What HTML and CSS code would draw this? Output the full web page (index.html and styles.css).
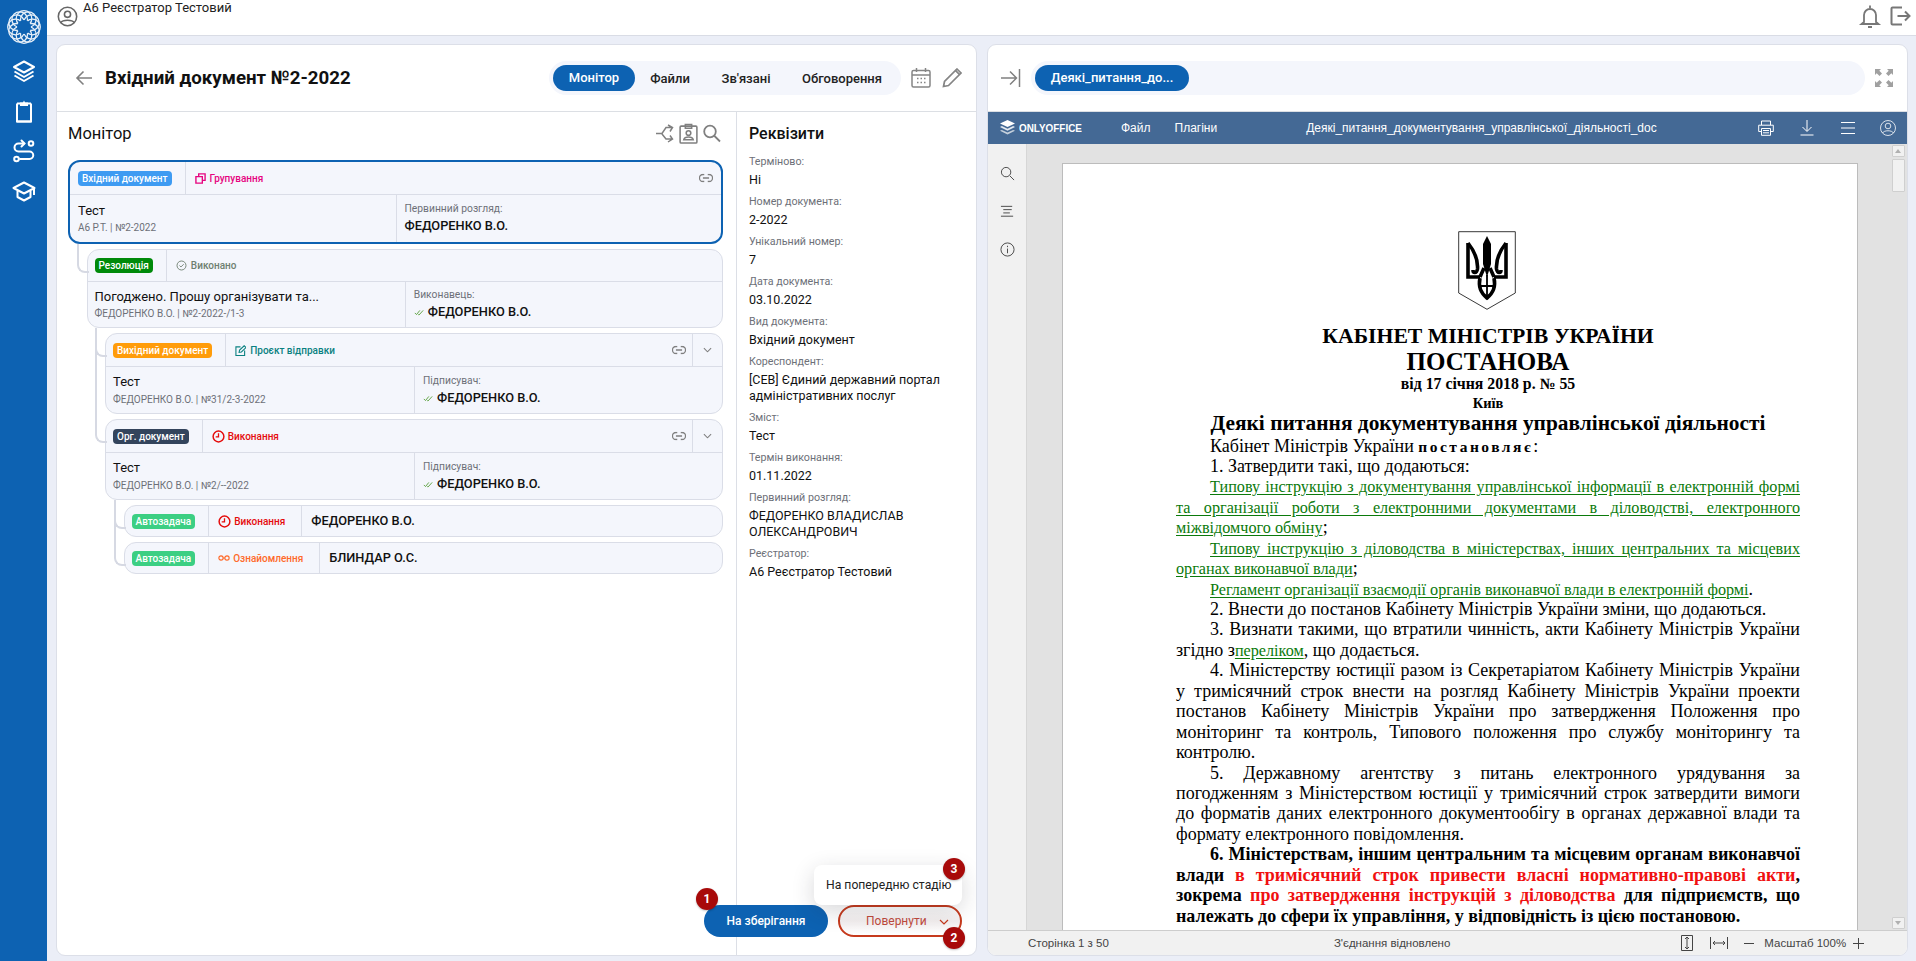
FILE: index.html
```html
<!DOCTYPE html>
<html lang="uk">
<head>
<meta charset="utf-8">
<title>Вхідний документ №2-2022</title>
<link rel="stylesheet" href="styles.css">
</head>
<body>
<svg class="defs" aria-hidden="true">
  <symbol id="i-link" viewBox="0 0 16 10"><path d="M6 1H4.5a4 4 0 0 0 0 8H6M10 1h1.500a4 4 0 0 1 0 8H10M4.500 5h7" fill="none" stroke="currentColor" stroke-width="1.500"/></symbol>
  <symbol id="i-chev" viewBox="0 0 10 6"><path d="M1 1l4 4 4-4" fill="none" stroke="currentColor" stroke-width="1.200"/></symbol>
  <symbol id="i-check" viewBox="0 0 12 8"><path d="M1 4.500l2 2 4-5M5 6.500l1 .5 5-5.500" fill="none" stroke="#5aa03c" stroke-width="1.100"/></symbol>
  <symbol id="i-clock" viewBox="0 0 14 14"><circle cx="7" cy="7" r="5.800" fill="none" stroke="currentColor" stroke-width="1.600"/><path d="M7 3.500V7.500H4" fill="none" stroke="currentColor" stroke-width="1.400"/></symbol>
</svg>
<aside class="rail">
  <svg class="rail-logo" viewBox="0 0 34 34"><g fill="none" stroke="#e6eff8" stroke-width="1.300"><circle cx="17" cy="8.500" r="7.800"/><circle cx="21.300" cy="9.600" r="7.800"/><circle cx="24.400" cy="12.700" r="7.800"/><circle cx="25.500" cy="17" r="7.800"/><circle cx="24.400" cy="21.300" r="7.800"/><circle cx="21.300" cy="24.400" r="7.800"/><circle cx="17" cy="25.500" r="7.800"/><circle cx="12.700" cy="24.400" r="7.800"/><circle cx="9.600" cy="21.300" r="7.800"/><circle cx="8.500" cy="17" r="7.800"/><circle cx="9.600" cy="12.700" r="7.800"/><circle cx="12.700" cy="9.600" r="7.800"/></g><circle cx="17" cy="17" r="7" fill="#0d62b2"/></svg>
  <svg class="rail-ic" viewBox="0 0 24 24"><g fill="none" stroke="#fff" stroke-width="2" stroke-linejoin="round"><path d="M12 2.500L22 8l-10 5.500L2 8z"/><path d="M2.500 12.500L12 18l9.500-5.500"/><path d="M2.500 16.500L12 22l9.500-5.500"/></g></svg>
  <svg class="rail-ic" viewBox="0 0 24 24"><path d="M5 4.500v18h14v-18" fill="#0d62b2" stroke="#fff" stroke-width="2"/><path d="M5 4.500h14M5 22.500h14" stroke="#fff" stroke-width="2"/><path d="M8 3.500h3l1-2 1 2h3V7H8z" fill="#fff"/></svg>
  <svg class="rail-ic" viewBox="0 0 24 24"><g fill="none" stroke="#fff" stroke-width="2" stroke-linecap="round"><circle cx="19" cy="4.500" r="2.300"/><circle cx="4.500" cy="20" r="2.300"/><path d="M12 4.500H6.500a4 4 0 0 0 0 8h11a3.700 3.700 0 0 1 0 7.500H8"/><path d="M9.500 1.500l3 3-3 3"/></g></svg>
  <svg class="rail-ic" viewBox="0 0 24 24"><g fill="none" stroke="#fff" stroke-width="2" stroke-linejoin="round"><path d="M12 3.500L1.500 9 12 14.500 22.500 9z"/><path d="M5.500 12v6l6.500 3.500 6.500-3.500v-6"/><path d="M22 9v7"/></g></svg>
</aside>
<div class="main">
  <header class="topbar">
    <svg class="top-avatar" viewBox="0 0 24 24"><g fill="none" stroke="#666" stroke-width="1.800"><circle cx="12" cy="12" r="10.500"/><circle cx="12" cy="9.500" r="3.500"/><path d="M4.500 19c2-3.500 13-3.500 15 0"/></g></svg>
    <div class="top-name">А6 Реєстратор Тестовий</div>
    <div class="top-right">
      <svg class="top-ic" viewBox="0 0 24 24"><path d="M12 1.500v2.500M6 18V11a6 6 0 0 1 12 0v7l2.500 2h-17zM10 23h4" fill="none" stroke="#777" stroke-width="1.800"/></svg>
      <svg class="top-ic" viewBox="0 0 24 24"><path d="M14 3.500H4.500a1 1 0 0 0-1 1v15a1 1 0 0 0 1 1H14M9.500 12H21.500M17 7.500l4.500 4.500-4.500 4.500" fill="none" stroke="#777" stroke-width="2"/></svg>
    </div>
  </header>
  <div class="content">
    <section class="card left">
      <div class="card-head">
        <svg class="back" viewBox="0 0 18 16"><path d="M17 8H2M8.500 1.500L2 8l6.500 6.500" fill="none" stroke="#808080" stroke-width="1.600"/></svg>
        <h1>Вхідний документ №2-2022</h1>
        <nav class="tabs">
          <span class="tab active">Монітор</span>
          <span class="tab t2">Файли</span>
          <span class="tab t3">Зв'язані</span>
          <span class="tab t4">Обговорення</span>
        </nav>
        <svg class="head-ic cal" viewBox="0 0 20 20"><g fill="none" stroke="#858585" stroke-width="1.500"><rect x="1" y="2.500" width="18" height="16.500" rx="1.500"/><path d="M1 7h18M5.500 0v4M14.500 0v4"/><path d="M6 10.500h1.500M9.500 10.500H11M13 10.500h1.500M6 14.500h1.500M9.500 14.500H11M13 14.500h1.500"/></g></svg>
        <svg class="head-ic pen" viewBox="0 0 20 20"><path d="M1.500 18.500l1-5L13.500 2.500l4 4-11 11z M15 1l4 4-1.500 1.500-4-4z" fill="none" stroke="#858585" stroke-width="1.700"/></svg>
      </div>
      <div class="left-body">
        <div class="monitor">
          <div class="mon-head">
            <h2>Монітор</h2>
            <div class="mon-tools">
              <svg class="tool t-a" viewBox="0 0 18 18"><path d="M0 9h6l4-6h6M12 .500L16.500 3 14 7M6 9.500l4 5h6M12 17.500l4.500-3L14 11" fill="none" stroke="#808080" stroke-width="1.500"/></svg>
              <svg class="tool t-b" viewBox="0 0 18 20"><g fill="none" stroke="#808080" stroke-width="1.500"><rect x="1" y="3" width="16" height="16" rx="1"/><path d="M6 5V1.500h6V5z"/><circle cx="9" cy="9.500" r="2.200"/><path d="M4.500 16c1-3.500 8-3.500 9 0z"/></g></svg>
              <svg class="tool t-c" viewBox="0 0 18 18"><g fill="none" stroke="#808080" stroke-width="1.800"><circle cx="7" cy="7" r="5.800"/><path d="M11 11l6 6"/></g></svg>
            </div>
          </div>
          <article class="node selected">
            <div class="n-top h-lg">
              <div class="cell"><span class="tag c-blue">Вхідний документ</span></div>
              <div class="cell st c-pink"><svg class="st-ic" viewBox="0 0 12 12"><path d="M4 4V1h7v7H8M1 4h7v7H1z" fill="none" stroke="currentColor" stroke-width="1.500"/></svg>Групування</div>
              <div class="tail"><svg class="link" viewBox="0 0 16 10"><use href="#i-link"/></svg></div>
            </div>
            <div class="n-body b-lg">
              <div class="col"><div class="ttl">Тест</div><div class="sub">А6 Р.Т. | №2-2022</div></div>
              <div class="col"><div class="lbl">Первинний розгляд:</div><div class="who">ФЕДОРЕНКО В.О.</div></div>
            </div>
          </article>
          <div class="branch only">
            <article class="node">
              <div class="n-top">
                <div class="cell"><span class="tag c-green">Резолюція</span></div>
                <div class="cell st c-gray"><svg class="st-ic" viewBox="0 0 12 12"><circle cx="6" cy="6" r="4.900" fill="none" stroke="currentColor"/><path d="M3.800 6l1.600 1.600 3-3" fill="none" stroke="currentColor"/></svg>Виконано</div>
              </div>
              <div class="n-body b-sm">
                <div class="col"><div class="ttl">Погоджено. Прошу організувати та...</div><div class="sub">ФЕДОРЕНКО В.О. | №2-2022-/1-3</div></div>
                <div class="col"><div class="lbl">Виконавець:</div><div class="who"><svg class="chk" viewBox="0 0 12 8"><use href="#i-check"/></svg>ФЕДОРЕНКО В.О.</div></div>
              </div>
            </article>
            <div class="branch">
              <article class="node">
                <div class="n-top h-md">
                  <div class="cell"><span class="tag c-orange">Вихідний документ</span></div>
                  <div class="cell st c-teal"><svg class="st-ic" viewBox="0 0 12 12"><path d="M6 2H1v9.500h9.500V6M4.500 8l.5-2.500L10 .8l2 2-5 4.800z" fill="none" stroke="currentColor" stroke-width="1.200"/></svg>Проєкт відправки</div>
                  <div class="tail"><svg class="link" viewBox="0 0 16 10"><use href="#i-link"/></svg></div>
                  <div class="chev"><svg viewBox="0 0 10 6"><use href="#i-chev"/></svg></div>
                </div>
                <div class="n-body">
                  <div class="col"><div class="ttl">Тест</div><div class="sub">ФЕДОРЕНКО В.О. | №31/2-3-2022</div></div>
                  <div class="col"><div class="lbl">Підписувач:</div><div class="who"><svg class="chk" viewBox="0 0 12 8"><use href="#i-check"/></svg>ФЕДОРЕНКО В.О.</div></div>
                </div>
              </article>
            </div>
            <div class="branch">
              <article class="node">
                <div class="n-top h-md">
                  <div class="cell"><span class="tag c-navy">Орг. документ</span></div>
                  <div class="cell st c-red"><svg class="st-ic big" viewBox="0 0 14 14"><use href="#i-clock"/></svg>Виконання</div>
                  <div class="tail"><svg class="link" viewBox="0 0 16 10"><use href="#i-link"/></svg></div>
                  <div class="chev"><svg viewBox="0 0 10 6"><use href="#i-chev"/></svg></div>
                </div>
                <div class="n-body">
                  <div class="col"><div class="ttl">Тест</div><div class="sub">ФЕДОРЕНКО В.О. | №2/--2022</div></div>
                  <div class="col"><div class="lbl">Підписувач:</div><div class="who"><svg class="chk" viewBox="0 0 12 8"><use href="#i-check"/></svg>ФЕДОРЕНКО В.О.</div></div>
                </div>
              </article>
              <div class="branch">
                <article class="node row">
                  <div class="cell"><span class="tag c-mint">Автозадача</span></div>
                  <div class="cell st c-red"><svg class="st-ic big" viewBox="0 0 14 14"><use href="#i-clock"/></svg>Виконання</div>
                  <div class="row-name">ФЕДОРЕНКО В.О.</div>
                </article>
              </div>
              <div class="branch">
                <article class="node row">
                  <div class="cell"><span class="tag c-mint">Автозадача</span></div>
                  <div class="cell st c-coral"><svg class="st-ic wide" viewBox="0 0 14 8"><g fill="none" stroke="currentColor" stroke-width="1.300"><circle cx="3.500" cy="4" r="2.500"/><circle cx="10.500" cy="4" r="2.500"/><path d="M6 4h2"/></g></svg>Ознайомлення</div>
                  <div class="row-name">БЛИНДАР О.С.</div>
                </article>
              </div>
            </div>
          </div>
        </div>
        <aside class="props">
          <h2>Реквізити</h2>
          <dl>
            <dt>Терміново:</dt><dd>Ні</dd>
            <dt>Номер документа:</dt><dd>2-2022</dd>
            <dt>Унікальний номер:</dt><dd>7</dd>
            <dt>Дата документа:</dt><dd>03.10.2022</dd>
            <dt>Вид документа:</dt><dd>Вхідний документ</dd>
            <dt>Кореспондент:</dt><dd>[СЕВ] Єдиний державний портал адміністративних послуг</dd>
            <dt>Зміст:</dt><dd>Тест</dd>
            <dt>Термін виконання:</dt><dd>01.11.2022</dd>
            <dt>Первинний розгляд:</dt><dd>ФЕДОРЕНКО ВЛАДИСЛАВ ОЛЕКСАНДРОВИЧ</dd>
            <dt>Реєстратор:</dt><dd>А6 Реєстратор Тестовий</dd>
          </dl>
        </aside>
      </div>
      <div class="actions">
        <button class="btn primary">На зберігання<span class="num n1">1</span></button>
        <button class="btn ghost">Повернути<svg class="btn-chev" viewBox="0 0 10 6"><use href="#i-chev"/></svg><span class="num n2">2</span></button>
        <div class="popup">На попередню стадію<span class="num n3">3</span></div>
      </div>
    </section>
    <section class="card right">
      <div class="card-head r-head">
        <svg class="r-collapse" viewBox="0 0 20 18"><path d="M0 9h15M9 2.500L15.500 9 9 15.500M18.500 0v18" fill="none" stroke="#808080" stroke-width="1.500"/></svg>
        <div class="file-tabs"><span class="file-tab">Деякі_питання_до...</span></div>
        <svg class="r-full" viewBox="0 0 18 18"><path d="M0 0h6L4.300 1.700 7 4.500 4.500 7 1.700 4.300 0 6zM18 0v6l-1.700-1.700L13.500 7 11 4.500l2.700-2.800L12 0zM0 18v-6l1.700 1.700L4.500 11 7 13.500l-2.700 2.800L6 18zM18 18h-6l1.700-1.700L11 13.500 13.500 11l2.800 2.700L18 12z" fill="#a0a0a0"/></svg>
      </div>
      <div class="editor">
        <div class="ed-bar">
          <div class="oo-logo"><svg viewBox="0 0 18 17"><path d="M9 0l8 3.700-8 3.700-8-3.700z" fill="#fff"/><path d="M3 6.500L9 9.300l6-2.800 2 1-8 3.800-8-3.800z" fill="#e3e9f0"/><path d="M3 10.500l6 2.800 6-2.800 2 1-8 3.800-8-3.800z" fill="#c5d0dc"/></svg><span>ONLYOFFICE</span></div>
          <span class="ed-menu m1">Файл</span>
          <span class="ed-menu m2">Плагіни</span>
          <span class="ed-title">Деякі_питання_документування_управлінської_діяльності_doc</span>
          <svg class="ed-ic p" viewBox="0 0 16 16"><path d="M3.500 5V1h9v4M3.500 11.500H.7V5.200h14.600v6.300h-2.800M3.500 8.500h9v6.800h-9zM5 10.500h6M5 12.800h6" fill="none" stroke="#fff"/></svg>
          <svg class="ed-ic d" viewBox="0 0 16 16"><path d="M8 0v11M3.500 7L8 11.500 12.500 7M1.500 15h13" fill="none" stroke="#fff"/></svg>
          <svg class="ed-ic h" viewBox="0 0 16 16"><path d="M1 2.500h14M1 8h14M1 13.500h14" fill="none" stroke="#fff"/></svg>
          <svg class="ed-ic u" viewBox="0 0 16 16"><g fill="none" stroke="#fff" stroke-width=".8"><circle cx="8" cy="8" r="7.500"/><circle cx="8" cy="6" r="2.800"/><path d="M2.500 13c1.500-3 9.500-3 11 0"/></g></svg>
        </div>
        <div class="ed-main">
          <div class="ed-left">
            <svg viewBox="0 0 16 16"><path d="M10.500 10.500L15 15M11.500 6.500a5 5 0 1 1-10 0 5 5 0 0 1 10 0z" fill="none" stroke="#444"/></svg>
            <svg viewBox="0 0 16 16"><path d="M1 2.500h12M3.500 6h9M3.500 9.500h7M1 13h13" fill="none" stroke="#444"/></svg>
            <svg viewBox="0 0 16 16"><circle cx="8" cy="8" r="7" fill="none" stroke="#444"/><path d="M8 7v5M8 4v1.500" stroke="#444"/></svg>
          </div>
          <div class="canvas">
            <div class="page">
              <svg class="arms" viewBox="0 0 58 79"><path d="M.7.700H57.300V62L29 78.300.7 62z" fill="#fff" stroke="#222" stroke-width=".9"/><g fill="none" stroke="#000" stroke-width="3.600"><path d="M10 12V46H22"/><path d="M10 12C18 22 20 31 19.500 38 18.500 43 15 42 15 39"/><path d="M48 12V46H36"/><path d="M48 12C40 22 38 31 38.500 38 39.500 43 43 42 43 39"/><path d="M22 46L26 37M36 46L32 37"/><path d="M22 47C20 56 24 63 29 67 34 63 38 56 36 47"/><path d="M29 44V65M21 55H37" stroke-width="1.800"/></g><path d="M29 5L33 13V33L29 46 25 33V13z" fill="#000"/></svg>
              <div class="d-h1">КАБІНЕТ МІНІСТРІВ УКРАЇНИ</div>
              <div class="d-h2">ПОСТАНОВА</div>
              <div class="d-h3">від 17 січня 2018 р. № 55</div>
              <div class="d-h3">Київ</div>
              <div class="d-h4">Деякі питання документування управлінської діяльності</div>
              <div class="l in">Кабінет Міністрів України <b class="sp">постановляє</b>:</div>
              <div class="l in">1. Затвердити такі, що додаються:</div>
              <div class="l in j"><u>Типову інструкцію з документування управлінської інформації в електронній формі</u></div>
              <div class="l j"><u>та організації роботи з електронними документами в діловодстві, електронного</u></div>
              <div class="l"><u>міжвідомчого обміну</u>;</div>
              <div class="l in j"><u>Типову інструкцію з діловодства в міністерствах, інших центральних та місцевих</u></div>
              <div class="l"><u>органах виконавчої влади</u>;</div>
              <div class="l in"><u>Регламент організації взаємодії органів виконавчої влади в електронній формі</u>.</div>
              <div class="l in">2. Внести до постанов Кабінету Міністрів України зміни, що додаються.</div>
              <div class="l in j">3. Визнати такими, що втратили чинність, акти Кабінету Міністрів України</div>
              <div class="l">згідно з<u>переліком</u>, що додається.</div>
              <div class="l in j">4. Міністерству юстиції разом із Секретаріатом Кабінету Міністрів України</div>
              <div class="l j">у тримісячний строк внести на розгляд Кабінету Міністрів України проекти</div>
              <div class="l j">постанов Кабінету Міністрів України про затвердження Положення про</div>
              <div class="l j">моніторинг та контроль, Типового положення про службу моніторингу та</div>
              <div class="l">контролю.</div>
              <div class="l in j">5. Державному агентству з питань електронного урядування за</div>
              <div class="l j">погодженням з Міністерством юстиції у тримісячний строк затвердити вимоги</div>
              <div class="l j">до форматів даних електронного документообігу в органах державної влади та</div>
              <div class="l">формату електронного повідомлення.</div>
              <div class="l in j b">6. Міністерствам, іншим центральним та місцевим органам виконавчої</div>
              <div class="l j b">влади <span class="red">в тримісячний строк привести власні нормативно-правові акти</span>,</div>
              <div class="l j b">зокрема <span class="red">про затвердження інструкцій з діловодства</span> для підприємств, що</div>
              <div class="l b">належать до сфери їх управління, у відповідність із цією постановою.</div>
            </div>
            <div class="scroll"><span class="sb-up"></span><span class="sb-thumb"></span><span class="sb-down"></span></div>
          </div>
        </div>
        <div class="ed-status">
          <span class="s-page">Сторінка 1 з 50</span>
          <span class="s-msg">З'єднання відновлено</span>
          <svg class="s-fit" viewBox="0 0 12 16"><path d="M.5.500h11v15H.5zM6 2v12M4 4l2-2 2 2M4 12l2 2 2-2" fill="none" stroke="#444"/></svg>
          <svg class="s-width" viewBox="0 0 18 12"><path d="M.5 0v12M17.500 0v12M3 6h12M5 4L3 6l2 2M13 4l2 2-2 2" fill="none" stroke="#444"/></svg>
          <span class="s-minus"></span>
          <span class="s-zoom">Масштаб 100%</span>
          <svg class="s-plus" viewBox="0 0 11 11"><path d="M0 5.500h11M5.500 0v11" stroke="#444"/></svg>
        </div>
      </div>
    </section>
  </div>
</div>
</body>
</html>
```

FILE: styles.css
```css
* { box-sizing: border-box; }
html, body { height: 100%; }
body {
  margin: 0;
  display: flex;
  height: 961px;
  overflow: hidden;
  background: #ebeef7;
  color: #111;
  font-family: Roboto, "Noto Sans", sans-serif;
}
.defs { position: absolute; width: 0; height: 0; }

/* rail */
.rail {
  width: 47px;
  flex: none;
  background: #0d62b2;
  display: flex;
  flex-direction: column;
  align-items: center;
  padding: 10px 0 0;
}
.rail-logo { width: 34px; height: 34px; margin-bottom: 15px; }
.rail-ic { width: 24px; height: 24px; margin-bottom: 16px; }

.main { flex: 1; min-width: 0; display: flex; flex-direction: column; }
.topbar {
  height: 36px;
  flex: none;
  background: #fff;
  border-bottom: 1px solid #d9dce5;
  display: flex;
  padding-left: 10px;
}
.top-avatar { width: 21px; height: 21px; margin-top: 6px; }
.top-name { font-size: 13px; margin: 0 0 0 5px; line-height: 16px; color: #222; }
.top-right { margin-left: auto; display: flex; gap: 6px; padding: 4px 4px 0 0; }
.top-ic { width: 24px; height: 24px; }

.content {
  flex: 1;
  min-height: 0;
  display: flex;
  gap: 10px;
  padding: 8px 8px 5px 9px;
}
.card {
  flex: 1 1 0;
  min-width: 0;
  background: #fff;
  border: 1px solid #dcdfe8;
  border-radius: 9px;
  display: flex;
  flex-direction: column;
  position: relative;
  overflow: hidden;
}
.card-head {
  height: 67px;
  flex: none;
  border-bottom: 1px solid #dcdfe4;
  display: flex;
  align-items: center;
}
.back { width: 18px; height: 16px; margin-left: 18px; }
h1 { font-size: 18.7px; font-weight: 700; margin: 0 0 0 12px; white-space: nowrap; }
.tabs {
  margin-left: auto;
  width: 352px;
  height: 34px;
  border-radius: 17px;
  background: #f4f6fc;
  padding: 4px;
  display: flex;
  align-items: center;
  font-size: 13px;
  font-weight: 500;
}
.tab { text-align: center; color: #222; }
.tab.active {
  width: 82px;
  height: 26px;
  line-height: 26px;
  background: #0d62b2;
  color: #fff;
  border-radius: 13px;
}
.t2 { width: 70px; }
.t3 { width: 82px; }
.t4 { width: 110px; }
.head-ic { width: 20px; height: 20px; flex: none; }
.cal { margin-left: 10px; }
.pen { margin: 0 14px 0 11px; }

.left-body { flex: 1; min-height: 0; display: flex; }
.monitor { width: 680px; flex: none; padding: 0 13px 0 11px; border-right: 1px solid #dcdfe6; }
.mon-head { height: 48px; padding-bottom: 6px; display: flex; align-items: center; justify-content: space-between; }
h2 { font-size: 16px; font-weight: 500; margin: 0; }
.mon-head h2 { font-weight: 400; font-size: 16.5px; }
.mon-tools { display: flex; align-items: center; gap: 5px; padding-right: 2px; }
.tool { height: 19px; width: 18px; }
.tool.t-b { height: 21px; width: 19px; }

/* tree nodes */
.node {
  background: #f4f6fc;
  border: 1px solid #dadde7;
  border-radius: 12px;
  overflow: hidden;
}
.node.selected { border: 2px solid #0d62b2; }
.selected .cell:first-child { padding-left: 8px; }
.n-top { height: 32px; display: flex; border-bottom: 1px solid #dadde7; }
.n-top.h-md { height: 33px; }
.n-top.h-lg { height: 33px; }
.cell {
  display: flex;
  align-items: center;
  padding: 0 13px 0 7px;
  border-right: 1px solid #dadde7;
}
.cell.st { padding-left: 9px; padding-right: 0; border-right: 0; font-size: 10px; font-weight: 500; white-space: nowrap; }
.tag {
  font-size: 10px;
  font-weight: 500;
  color: #fff;
  line-height: 15px;
  padding: 0 4px;
  border-radius: 4px;
  white-space: nowrap;
}
.c-blue { background: #3e9bf2; }
.c-green { background: #008a0a; }
.c-orange { background: #ff9c0a; }
.c-navy { background: #33445c; }
.c-mint { background: #3ccf83; }
.st.c-pink { color: #e6057f; }
.st.c-gray { color: #6e7f70; }
.st.c-teal { color: #0a8181; }
.st.c-red { color: #e50c0c; }
.st.c-coral { color: #ff6a2a; }
.st-ic { width: 11px; height: 11px; margin-right: 4px; flex: none; }
.st-ic.big { width: 13px; height: 13px; margin-right: 3px; }
.st-ic.wide { width: 12px; height: 8px; margin-right: 3px; }
.tail { margin-left: auto; display: flex; align-items: center; color: #7f7f7f; }
.selected .tail { padding-right: 2px; }
.link { width: 14px; height: 10px; margin-right: 6px; }
.chev {
  width: 30px;
  border-left: 1px solid #dadde7;
  display: flex;
  align-items: center;
  justify-content: center;
  color: #7f7f7f;
}
.chev svg { width: 9px; height: 6px; }
.n-body { display: grid; grid-template-columns: 1fr 1fr; height: 46px; }
.n-body.b-sm { height: 45px; }
.n-body.b-lg { height: 47px; }
.col { padding: 6px 8px 0 8px; }
.col:first-child { padding-left: 7px; }
.selected .col:first-child { padding-left: 8px; }
.col + .col { border-left: 1px solid #dadde7; padding-top: 7px; }
.b-sm .col + .col { padding-top: 6px; }
.b-lg .col:first-child { padding-top: 7px; }
.b-sm .sub, .b-lg .sub { margin-top: 1px; }
.ttl { font-size: 13px; line-height: 18px; white-space: nowrap; color: #111; }
.sub { font-size: 10px; line-height: 14px; margin-top: 2px; color: #6d7078; }
.lbl { font-size: 10.3px; line-height: 14px; color: #6d7078; }
.who { font-size: 12.8px; line-height: 18px; margin-top: 1px; font-weight: 500; display: flex; align-items: center; color: #111; }
.chk { width: 10px; height: 7px; margin-right: 4px; }
.branch { position: relative; margin: 5px 0 0 18.5px; }
.branch::before {
  content: "";
  position: absolute;
  left: -10px;
  top: -5px;
  width: 10px;
  height: 27px;
  border-left: 2px solid #d6d9e3;
  border-bottom: 2px solid #d6d9e3;
  border-bottom-left-radius: 8px;
}
.branch:not(:last-child)::after {
  content: "";
  position: absolute;
  left: -10px;
  top: 0;
  bottom: -5px;
  border-left: 2px solid #d6d9e3;
}
.node.row { display: flex; height: 32px; }
.row .cell { height: 100%; }
.row .cell.st { padding-left: 9px; padding-right: 16px; border-right: 1px solid #dadde7; }
.row-name { font-size: 12.8px; font-weight: 500; line-height: 30px; padding-left: 9px; }

/* props */
.props { flex: 1; padding: 12px 12px 0 12px; }
.props h2 { line-height: 20px; font-size: 16px; }
dl { margin: 11px 0 0; }
dt { font-size: 10.7px; line-height: 14px; color: #6d7078; margin-top: 7px; }
dt:first-child { margin-top: 0; }
dd { margin: 3px 0 0; font-size: 12.5px; line-height: 16px; color: #111; font-weight: 400; }

/* actions */
.actions { position: absolute; left: 0; top: 0; width: 100%; height: 100%; pointer-events: none; }
.btn {
  position: absolute;
  top: 860px;
  height: 32px;
  width: 124px;
  border-radius: 16px;
  font-family: inherit;
  font-size: 12px;
  font-weight: 500;
  padding: 0;
}
.primary { left: 647px; background: #0d62b2; color: #fff; border: 0; }
.ghost {
  left: 781px;
  background: linear-gradient(180deg, #fff, #f3efef 50%, #fff);
  color: #bf4a3c;
  border: 2px solid #c63a1d;
  font-weight: 400;
  text-align: left;
  padding-left: 26px;
}
.btn-chev { position: absolute; right: 11px; top: 12px; width: 10px; height: 6px; color: #c63a1d; }
.popup {
  position: absolute;
  left: 757px;
  top: 820px;
  width: 148px;
  height: 40px;
  background: #fff;
  border-radius: 8px;
  box-shadow: 0 6px 22px rgba(40, 40, 50, .18);
  font-size: 12.2px;
  line-height: 40px;
  padding-left: 12px;
  color: #222;
  white-space: nowrap;
}
.num {
  position: absolute;
  width: 22px;
  height: 22px;
  border-radius: 50%;
  background: #a80a0a;
  color: #fff;
  font-size: 12px;
  font-weight: 700;
  line-height: 22px;
  text-align: center;
  box-shadow: 0 1px 2px rgba(0,0,0,.25);
}
.n1 { left: -8px; top: -17px; }
.n2 { left: 103px; top: 20px; }
.n3 { left: 129px; top: -7px; }

/* right card */
.r-head { height: 67px; padding: 0 14px 0 13px; }
.r-collapse { width: 20px; height: 18px; flex: none; }
.file-tabs {
  flex: 1;
  height: 34px;
  margin: 0 10px;
  border-radius: 17px;
  background: #f4f6fc;
  padding: 4px;
}
.file-tab {
  display: block;
  width: 154px;
  height: 26px;
  line-height: 26px;
  text-align: center;
  background: #0d62b2;
  color: #fff;
  border-radius: 13px;
  font-size: 13px;
  font-weight: 500;
}
.r-full { width: 18px; height: 18px; flex: none; }
.editor { flex: 1; min-height: 0; display: flex; flex-direction: column; font-family: "Liberation Sans", Arial, sans-serif; }
.ed-bar {
  height: 32px;
  flex: none;
  background: #446995;
  color: #fff;
  display: flex;
  align-items: center;
  font-size: 12px;
}
.oo-logo { display: flex; align-items: center; width: 97px; margin-left: 11px; font-size: 11px; font-weight: 700; }
.oo-logo svg { width: 17px; height: 16px; margin-right: 3px; flex: none; }
.oo-logo span { display: inline-block; transform: scaleX(.9); transform-origin: left center; }
.m1 { margin-left: 25px; }
.m2 { margin-left: 24px; }
.ed-title { margin-left: 89px; white-space: nowrap; }
.ed-ic { width: 16px; height: 16px; flex: none; }
.p { margin-left: auto; }
.d { margin-left: 25px; }
.h { margin-left: 25px; }
.u { margin: 0 11px 0 24px; }
.ed-main { flex: 1; min-height: 0; display: flex; }
.ed-left {
  width: 39px;
  flex: none;
  background: #f1f1f1;
  border-right: 1px solid #d6d6d6;
  display: flex;
  flex-direction: column;
  align-items: center;
  gap: 23px;
  padding-top: 22px;
}
.ed-left svg { width: 15px; height: 15px; }
.canvas { flex: 1; background: #e2e2e2; padding: 19px 0 0 35px; position: relative; overflow: hidden; }
.page {
  width: 796px;
  height: 900px;
  background: #fff;
  border: 1px solid #bcbcbc;
  padding: 67px 57px 0 113px;
  font-family: "Liberation Serif", "Times New Roman", serif;
  color: #000;
  font-size: 18px;
}
.arms { display: block; width: 58px; height: 79px; margin-left: 282px; }
.d-h1, .d-h2, .d-h3, .d-h4 { text-align: center; font-weight: 700; white-space: nowrap; }
.d-h1 { font-size: 21.7px; line-height: 24px; margin-top: 14px; }
.d-h2 { font-size: 25px; line-height: 27px; }
.d-h3 { font-size: 15.8px; line-height: 18.500px; }
.d-h3 + .d-h3 { font-size: 14.5px; }
.d-h4 { font-size: 21.4px; line-height: 23.500px; }
.l { line-height: 20.45px; height: 20.45px; white-space: nowrap; }
.l.j { text-align: justify; text-align-last: justify; white-space: normal; }
.l.in { padding-left: 34px; }
.l.b { font-weight: 700; }
.l u { color: #0b7a0b; text-underline-offset: 2px; font-size: 16.2px; }
.sp { letter-spacing: 2.500px; font-size: 15.500px; }
.red { color: #f01010; }
.scroll { position: absolute; right: 0; top: 0; bottom: 0; width: 15px; }
.sb-up, .sb-thumb, .sb-down {
  position: absolute;
  left: 0;
  width: 13px;
  background: #f1f1f1;
  border: 1px solid #cfcfcf;
  border-radius: 1px;
}
.sb-up { top: 1px; height: 12px; }
.sb-up::after, .sb-down::after {
  content: "";
  position: absolute;
  left: 2px;
  border-left: 3.500px solid transparent;
  border-right: 3.500px solid transparent;
}
.sb-up::after { top: 3px; border-bottom: 4px solid #b0b0b0; }
.sb-down::after { top: 3px; border-top: 4px solid #b0b0b0; }
.sb-thumb { top: 15px; height: 33px; }
.sb-down { bottom: 1px; height: 12px; }
.ed-status {
  height: 25px;
  flex: none;
  background: #f1f1f1;
  border-top: 1px solid #cdcdcd;
  display: flex;
  align-items: center;
  font-size: 11.5px;
  color: #444;
  padding-left: 40px;
}
.s-msg { margin-left: 225px; }
.s-fit { width: 12px; height: 16px; margin-left: 231px; }
.s-width { width: 18px; height: 12px; margin-left: 17px; }
.s-minus { width: 10px; height: 1px; background: #444; margin-left: 16px; }
.s-zoom { margin-left: 10px; white-space: nowrap; }
.s-plus { width: 11px; height: 11px; margin-left: 7px; }
```
